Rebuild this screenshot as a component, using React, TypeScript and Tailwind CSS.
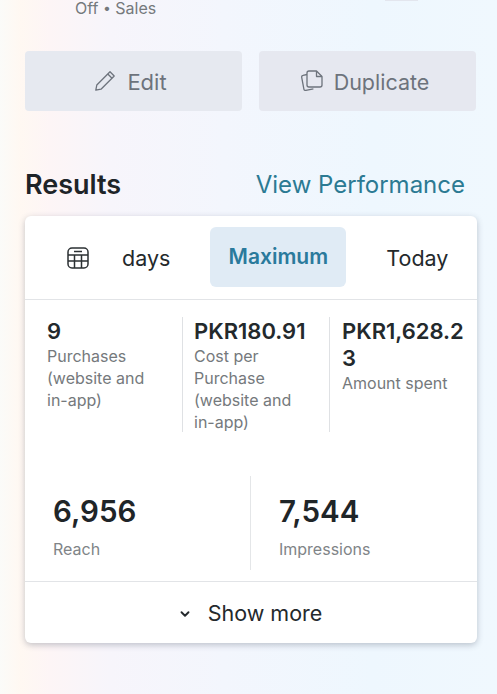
import type { ReactNode } from 'react';
import { ChevronDown } from 'lucide-react';

function Metric({ value, label, className }: { value: string; label: ReactNode; className: string }) {
  return (
    <div className={className}>
      <div className="pt-px text-[22px] leading-[27px] font-semibold text-[#23292c] break-all">{value}</div>
      <div className="text-[16px] leading-[22px] text-[#75797c]">{label}</div>
    </div>
  );
}

function CalendarIcon() {
  return (
    <svg width="22" height="22" viewBox="0 0 22 22" fill="none" stroke="#2b3033" strokeWidth="1.5">
      <rect x="1" y="1" width="20" height="20" rx="4" />
      <path d="M7 4.5h8M1 8h20M1 14h20M7.5 8v13M14.5 8v13" />
    </svg>
  );
}

function PencilIcon() {
  return (
    <svg width="22" height="22" viewBox="0 0 22 22" fill="none" stroke="#6d737c" strokeWidth="1.3" strokeLinejoin="round">
      <path d="M16 1.8l4.2 4.2L7 19.2l-5.2 1 1-5.2z" />
      <path d="M13.8 4l4.2 4.2" />
    </svg>
  );
}

function SheetsIcon() {
  return (
    <svg width="24" height="24" viewBox="0 0 24 24" fill="none" stroke="#6d737c" strokeWidth="1.3" strokeLinejoin="round">
      <path d="M7 5.5L3 6.4c-1 .2-1.5 1-1.3 2l2.2 11.7c.2 1 1 1.5 2 1.3l7.5-1.6" />
      <path d="M9 2h7.5L22 7.5V16c0 1.2-.8 2-2 2H9c-1.2 0-2-.8-2-2V4c0-1.2.8-2 2-2z" />
      <path d="M16.5 2v5.5H22" />
    </svg>
  );
}

export default function App() {
  return (
    <div className="h-[694px] w-[497px] overflow-hidden bg-[linear-gradient(90deg,#fbfbf9_0%,#fff8f2_4%,#fdf5f6_10%,#f7f5fb_22%,#f3f6fd_45%,#eef7fe_75%,#f0f8fe_100%)] pl-[25px] pr-[20px] font-['Inter','Noto_Sans',sans-serif]">
      <div className="flex h-[51px] items-start justify-between pl-[50px] pr-[59px]">
        <div className="text-[16px] leading-[16px] text-[#75797c]">
          Off <span className="align-[1px] text-[14px]">•</span> Sales
        </div>
        <div className="h-px w-[33px] bg-[#e3e6ee]" />
      </div>

      <div className="flex gap-[17px]">
        <button className="flex h-[60px] w-[217px] items-center justify-center gap-[11px] rounded-[4px] bg-[#e6e9f0] pr-[6px] text-[22px] text-[#6d737c]">
          <PencilIcon />
          <span className="pt-[2px]">Edit</span>
        </button>
        <button className="flex h-[60px] w-[217px] items-center justify-center gap-[10px] rounded-[4px] bg-[#e6e8f0] pr-[6px] text-[21.5px] text-[#6d737c]">
          <SheetsIcon />
          <span className="pt-[2px]">Duplicate</span>
        </button>
      </div>

      <div className="mt-[57px] flex items-center justify-between pr-[12px]">
        <h2 className="pt-px text-[27px] leading-[31px] font-semibold text-[#1e2428]">Results</h2>
        <a className="pt-px text-[24px] leading-[31px] text-[#2b7a93]">View Performance</a>
      </div>

      <div className="mt-[16px] h-[427px] rounded-[6px] bg-white shadow-[0_2px_6px_rgba(60,70,90,0.3)]">
        <div className="flex h-[84px] items-center border-b border-[#e2e4e7]">
          <div className="ml-[42px] w-[55px]"><CalendarIcon /></div>
          <span className="pt-[2px] text-[21.5px] text-[#24292c]">days</span>
          <div className="mt-[-1px] ml-[40px] flex h-[60px] w-[136px] items-center justify-center rounded-[6px] bg-[#e0ebf5] text-[21px] font-semibold text-[#2a7a9c]">Maximum</div>
          <span className="ml-[40px] pt-[2px] text-[21.5px] text-[#24292c]">Today</span>
        </div>

        <div className="mt-[17px] flex h-[115px]">
          <Metric value="9" label={<>Purchases (website and <span className="whitespace-nowrap">in-app)</span></>} className="w-[157px] pl-[22px] pr-[10px]" />
          <Metric value="PKR180.91" label={<>Cost per Purchase (website and <span className="whitespace-nowrap">in-app)</span></>} className="w-[147px] border-l border-[#dfe1e4] pl-[11px] pr-[20px]" />
          <Metric value="PKR1,628.23" label="Amount spent" className="w-[148px] border-l border-[#dfe1e4] pl-[12px] pr-[12px]" />
        </div>

        <div className="mt-[44px] flex h-[94px]">
          <div className="w-[225px] pl-[28px] pt-[16px]">
            <div className="text-[29.5px] leading-[38px] font-semibold text-[#1f2528]">6,956</div>
            <div className="mt-[8px] text-[16px] leading-[22px] text-[#808487]">Reach</div>
          </div>
          <div className="border-l border-[#e4e6e8] pl-[28px] pt-[16px]">
            <div className="text-[29.5px] leading-[38px] font-semibold text-[#1f2528]">7,544</div>
            <div className="mt-[8px] text-[16px] leading-[22px] text-[#808487]">Impressions</div>
          </div>
        </div>

        <div className="mt-[11px] flex h-[62px] items-center justify-center gap-[16px] border-t border-[#e2e4e7] pr-[2px] pt-[2px] text-[21.5px] text-[#24292c]">
          <ChevronDown size={14} strokeWidth={3.2} />
          Show more
        </div>
      </div>
    </div>
  );
}
